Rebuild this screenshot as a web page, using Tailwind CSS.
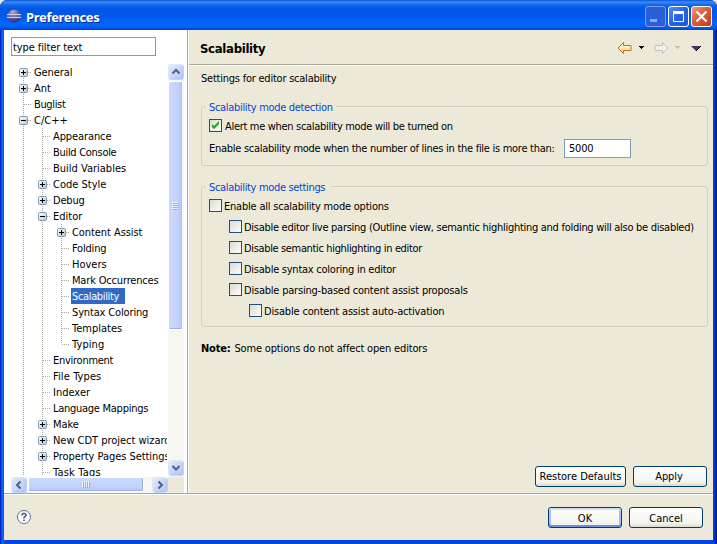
<!DOCTYPE html>
<html lang="en">
<head>
<meta charset="utf-8">
<title>Preferences</title>
<script src="https://cdn.jsdelivr.net/npm/@tailwindcss/browser@4"></script>
</head>
<body class="w-[717px] h-[544px] overflow-hidden bg-[#ece9d8]">
<svg class="absolute w-0 h-0">
  <defs>
    <linearGradient id="sbg" x2="1" y2="1"><stop stop-color="#e1eafe"/><stop offset="1" stop-color="#b0c6f8"/></linearGradient>
    <linearGradient id="cbg" x2="1" y2="1"><stop stop-color="#d8d8d2"/><stop offset="1" stop-color="#fff"/></linearGradient>
    <linearGradient id="bxg" x2="1" y2="1"><stop stop-color="#fff"/><stop offset="1" stop-color="#c8c2b4"/></linearGradient>
    <g id="sb"><rect x=".5" y=".5" width="15" height="15" rx="2" fill="#fff" stroke="#dfe6f5"/><rect x="1" y="1" width="14" height="14" rx="2" fill="url(#sbg)"/><path d="M2 15h12.500l.5-.5V2" fill="none" stroke="#a3bbee" stroke-width=".8"/></g>
    <g id="cb"><rect x=".5" y=".5" width="12" height="12" fill="url(#cbg)" stroke="#1c5180"/></g>
  </defs>
</svg>
<div class="w-[717px] h-[544px] flex flex-col rounded-t-[7px] overflow-hidden bg-[#0046dd] bg-[linear-gradient(90deg,#0019cf_0,#0831d9_1px,#166aee_2px,#0855dd_4px,#0046dd_8px,#0046dd_713px,#0441d8_714px,#001ea0_716px,#00138c_717px)] font-['DejaVu_Sans_Condensed','DejaVu_Sans',sans-serif] text-[11px] leading-[16px] text-black whitespace-nowrap">

  <header class="h-[30px] shrink-0 flex items-center pl-[6px] pr-[5px] bg-[linear-gradient(180deg,#0a4fd6_0,#3c8cf9_2px,#0f66ee_5px,#0056e4_9px,#0058ec_16px,#0066ff_23px,#0064fa_26px,#0046d0_30px)]">
    <svg class="mt-[2px] w-[16px] h-[16px]" viewBox="0 0 16 16">
      <defs><radialGradient id="orb" cx=".4" cy=".2" r=".85"><stop offset="0" stop-color="#c0a9c4"/><stop offset=".5" stop-color="#6a619c"/><stop offset="1" stop-color="#2c2468"/></radialGradient></defs>
      <circle cx="8" cy="8" r="6.500" fill="url(#orb)"/>
      <path d="M1 6.500h14M1 9.500h14" stroke="#c9cdf3" stroke-width="1"/><path d="M1 8h14" stroke="#7a78b4" stroke-width="1"/>
    </svg>
    <h1 class="ml-[4px] mt-[3px] font-['Noto_Sans','Open_Sans',sans-serif] font-bold text-[13px] tracking-[-0.32px] text-white [text-shadow:1px_1px_0_#0a2a86]">Preferences</h1>
    <div class="ml-auto mt-[3px] flex gap-[2px]">
      <svg class="w-[21px] h-[21px]" viewBox="0 0 21 21"><rect x=".5" y=".5" width="20" height="20" rx="2.500" fill="#2a5fd9" stroke="#7f9fe8"/><path d="M5 13h7v3H5z" fill="#8fa6ec"/></svg>
      <svg class="w-[21px] h-[21px]" viewBox="0 0 21 21"><defs><linearGradient id="mx" x2="1" y2="1"><stop stop-color="#5b8cf5"/><stop offset=".5" stop-color="#2763e4"/><stop offset="1" stop-color="#1f56d4"/></linearGradient></defs><rect x=".5" y=".5" width="20" height="20" rx="2.500" fill="url(#mx)" stroke="#fff"/><path d="M5.500 6v9.500h10V6" fill="none" stroke="#fff"/><path d="M5 5h11v3H5z" fill="#fff"/></svg>
      <svg class="w-[21px] h-[21px]" viewBox="0 0 21 21"><defs><linearGradient id="cl" x2="1" y2="1"><stop stop-color="#f0a084"/><stop offset=".45" stop-color="#e25a34"/><stop offset="1" stop-color="#c53a10"/></linearGradient></defs><rect x=".5" y=".5" width="20" height="20" rx="2.500" fill="url(#cl)" stroke="#fff"/><path d="M5.500 5.500l10 10M15.500 5.500l-10 10" stroke="#fff" stroke-width="2.300"/></svg>
    </div>
  </header>

  <div class="flex-1 min-h-0 flex flex-col mx-[4px] mb-[4px] bg-[#ece9d8]">
    <main class="h-[463px] flex">
      <aside class="w-[183px] bg-white flex flex-col pl-[7px] pt-[7px]">
        <div class="w-[145px] h-[19px] border border-[#7f9db9] pl-[1px] leading-[19px] tracking-[-0.1px]">type filter text</div>
        <div class="mt-[8px] w-[173px] grid grid-cols-[157px_16px] grid-rows-[413px_16px]">
          <ul id="tree" class="w-[156px] h-[412px] overflow-hidden pl-[3px]"></ul>
          <div class="flex flex-col bg-[#f7f6f1]">
            <svg class="w-[16px] h-[16px] shrink-0" viewBox="0 0 16 16"><use href="#sb"/><path d="M4.500 9.500L8 6l3.500 3.500" fill="none" stroke="#4d6185" stroke-width="2"/></svg>
            <div class="mt-px w-[15px] h-[249px] rounded-[2px] border border-white bg-[linear-gradient(90deg,#cbdafd,#c3d3fc_60%,#b5c9f7)] [box-shadow:inset_0_-1px_#98b0e2,inset_-1px_0_#a9bfee] flex items-center justify-center">
              <svg class="w-[7px] h-[8px]" viewBox="0 0 7 8"><path d="M0 .5h6M0 2.500h6M0 4.500h6M0 6.500h6" stroke="#eef4fe"/><path d="M1 1.500h6M1 3.500h6M1 5.500h6M1 7.500h6" stroke="#8cb0f8"/></svg>
            </div>
            <svg class="w-[16px] h-[16px] shrink-0 mt-auto mb-px" viewBox="0 0 16 16"><use href="#sb"/><path d="M4.500 6L8 9.500 11.500 6" fill="none" stroke="#4d6185" stroke-width="2"/></svg>
          </div>
          <div class="flex bg-[#f7f6f1]">
            <svg class="w-[16px] h-[16px] shrink-0" viewBox="0 0 16 16"><use href="#sb"/><path d="M9.500 4.500L6 8l3.500 3.500" fill="none" stroke="#4d6185" stroke-width="2"/></svg>
            <div class="ml-px w-[116px] h-[15px] rounded-[2px] border border-white bg-[linear-gradient(180deg,#cbdafd,#c3d3fc_60%,#b5c9f7)] [box-shadow:inset_0_-1px_#98b0e2,inset_-1px_0_#98b0e2] flex items-center justify-center">
              <svg class="w-[8px] h-[7px]" viewBox="0 0 8 7"><path d="M.5 0v6M2.500 0v6M4.500 0v6M6.500 0v6" stroke="#eef4fe"/><path d="M1.500 1v6M3.500 1v6M5.500 1v6M7.500 1v6" stroke="#8cb0f8"/></svg>
            </div>
            <svg class="w-[16px] h-[16px] shrink-0 ml-auto" viewBox="0 0 16 16"><use href="#sb"/><path d="M6.500 4.500L10 8l-3.500 3.500" fill="none" stroke="#4d6185" stroke-width="2"/></svg>
          </div>
          <div class="bg-[#ece9d8]"></div>
        </div>
      </aside>
      <div class="w-[2px] border-l border-[#aca899] bg-white"></div>

      <section class="flex-1 min-w-0 flex flex-col">
        <div class="h-[36px] shrink-0 flex items-center pl-[11px] pr-[12px] border-b border-white [box-shadow:inset_0_-1px_#aca899]">
          <h2 class="mt-[2px] font-bold text-[13px] tracking-[-0.3px]">Scalability</h2>
          <svg class="ml-auto w-[86px] h-[14px]" viewBox="0 0 86 14">
            <defs><linearGradient id="ar" x2="0" y2="1"><stop stop-color="#fffbe0"/><stop offset="1" stop-color="#fcd77c"/></linearGradient></defs>
            <g transform="translate(2 1)">
            <path d="M1 6L6.500.5v3H14v5H6.500v3z" fill="url(#ar)" stroke="#b8771a"/>
            <path d="M22 4h5v1h-5zM23 5h3v1h-3zM24 6h1v1h-1z" fill="#000"/>
            <path d="M51 6L45.500.5v3H38v5h7.500v3z" fill="#f0f0ee" stroke="#c0c0bc"/>
            <path d="M58 4h5v1h-5zM59 5h3v1h-3zM60 6h1v1h-1z" fill="#c0beb4"/>
            <path d="M74 4h10l-5 5z" fill="#3d3668"/><path d="M79 9l5-5" stroke="#000"/>
            </g>
          </svg>
        </div>
        <div class="pl-[12px] pr-[5px]">
          <p class="mt-[5px] tracking-[-0.23px]">Settings for editor scalability</p>
          <fieldset class="relative mt-[19px] w-[507px] min-w-0 h-[60px] border border-[#d0d0bf] rounded-[3px] pl-[7px] pt-[11px]">
            <span class="absolute left-[4px] top-[-7px] px-[3px] bg-[#ece9d8] text-[#0046d5] tracking-[-0.32px]">Scalability mode detection</span>
            <label class="flex items-start gap-[3px] h-[16px]"><svg class="mt-px w-[13px] h-[13px]" viewBox="0 0 13 13"><use href="#cb"/><path d="M3 5v3l2 2 5-5V2L5 7z" fill="#21a121"/></svg><span class="mt-px tracking-[-0.31px]">Alert me when scalability mode will be turned on</span></label>
            <div class="mt-[5px] flex items-center"><span class="w-[355px] mt-px tracking-[-0.28px]">Enable scalability mode when the number of lines in the file is more than:</span><span class="w-[67px] h-[19px] border border-[#7f9db9] bg-white pl-[4px] leading-[18px] tracking-[-0.2px]">5000</span></div>
          </fieldset>
          <fieldset class="relative mt-[20px] w-[507px] min-w-0 h-[141px] border border-[#d0d0bf] rounded-[3px] pl-[7px] pt-[11px] flex flex-col gap-[5px]">
            <span class="absolute left-[4px] top-[-7px] pl-[3px] pr-[6px] bg-[#ece9d8] text-[#0046d5] tracking-[-0.34px]">Scalability mode settings</span>
            <label class="flex items-start gap-[2px] h-[16px]"><svg class="mt-px w-[13px] h-[13px]" viewBox="0 0 13 13"><use href="#cb"/></svg><span class="mt-px tracking-[-0.21px]">Enable all scalability mode options</span></label>
            <label class="flex items-start gap-[2px] h-[16px] pl-[20px]"><svg class="mt-px w-[13px] h-[13px] shrink-0" viewBox="0 0 13 13"><use href="#cb"/></svg><span class="mt-px tracking-[-0.28px]">Disable editor live parsing (Outline view, semantic highlighting and folding will also be disabled)</span></label>
            <label class="flex items-start gap-[2px] h-[16px] pl-[20px]"><svg class="mt-px w-[13px] h-[13px]" viewBox="0 0 13 13"><use href="#cb"/></svg><span class="mt-px tracking-[-0.35px]">Disable semantic highlighting in editor</span></label>
            <label class="flex items-start gap-[2px] h-[16px] pl-[20px]"><svg class="mt-px w-[13px] h-[13px]" viewBox="0 0 13 13"><use href="#cb"/></svg><span class="mt-px tracking-[-0.25px]">Disable syntax coloring in editor</span></label>
            <label class="flex items-start gap-[2px] h-[16px] pl-[20px]"><svg class="mt-px w-[13px] h-[13px]" viewBox="0 0 13 13"><use href="#cb"/></svg><span class="mt-px tracking-[-0.21px]">Disable parsing-based content assist proposals</span></label>
            <label class="flex items-start gap-[2px] h-[16px] pl-[40px]"><svg class="mt-px w-[13px] h-[13px]" viewBox="0 0 13 13"><use href="#cb"/></svg><span class="mt-px tracking-[-0.18px]">Disable content assist auto-activation</span></label>
          </fieldset>
          <p class="mt-[14px] flex gap-[4px]"><b class="tracking-[-0.2px]">Note:</b><span class="tracking-[-0.17px]">Some options do not affect open editors</span></p>
        </div>
        <div class="mt-auto mb-[6px] pr-[6px] flex justify-end gap-[7px]">
          <button class="w-[91px] h-[21px] rounded-[3px] border border-[#003c74] bg-[linear-gradient(180deg,#fff,#f3f3ef_80%,#dcd8cc)] leading-[20px]">Restore Defaults</button>
          <button class="w-[74px] h-[21px] rounded-[3px] border border-[#003c74] bg-[linear-gradient(180deg,#fff,#f3f3ef_80%,#dcd8cc)] leading-[20px] pr-[2px] tracking-[-0.1px]">Apply</button>
        </div>
      </section>
    </main>

    <footer class="flex-1 border-t border-[#aca899] [box-shadow:inset_0_1px_#fff] flex pl-[12px] pr-[10px] pt-[13px]">
      <svg class="w-[16px] h-[16px] mt-[2px]" viewBox="0 0 16 16"><circle cx="8" cy="8" r="6.500" fill="#fff" stroke="#5f6f92"/><path d="M6 6.500V5.500L7 4.500h2l1 1v1L8 8.500v1" fill="none" stroke="#44557c" stroke-width="1.500"/><path d="M7.200 10.500h1.600v1.500H7.200z" fill="#44557c"/></svg>
      <div class="ml-auto flex gap-[7px]">
        <button class="w-[74px] h-[21px] rounded-[3px] border border-[#003c74] bg-[linear-gradient(180deg,#fff,#f3f3ef_80%,#e8e5dc)] [box-shadow:inset_0_2px_#cee0fb,inset_0_-2px_#6f8fdc,inset_2px_0_#a6c0f0,inset_-2px_0_#a6c0f0] leading-[21px]">OK</button>
        <button class="w-[74px] h-[21px] rounded-[3px] border border-[#003c74] bg-[linear-gradient(180deg,#fff,#f3f3ef_80%,#dcd8cc)] leading-[21px]">Cancel</button>
      </div>
    </footer>
  </div>
</div>

<script>
// [depth, label, kind, tracking in px]: kind is + (closed), - (open) or empty (leaf)
const rows = [
  [0,'General','+',-.1],[0,'Ant','+',0],[0,'Buglist','',-.35],[0,'C/C++','-',0],
  [1,'Appearance','',-.1],[1,'Build Console','',-.3],[1,'Build Variables','',0],[1,'Code Style','+',0],[1,'Debug','+',-.2],[1,'Editor','-',0],
  [2,'Content Assist','+',-.07],[2,'Folding','',-.2],[2,'Hovers','',0],[2,'Mark Occurrences','',-.17],[2,'Scalability','',-.35],[2,'Syntax Coloring','',-.15],[2,'Templates','',0],[2,'Typing','',.1],
  [1,'Environment','',-.27],[1,'File Types','',.1],[1,'Indexer','',0],[1,'Language Mappings','',-.27],[1,'Make','+',-.1],[1,'New CDT project wizard','+',-.03],[1,'Property Pages Settings','+',-.05],[1,'Task Tags','',.2]
];
const line = d => `<path d="${d}" stroke="#aca899" stroke-dasharray="1 1"/>`;
const cell = s => `<svg class="w-[19px] h-[16px] shrink-0" viewBox="0 0 19 16">${s}</svg>`;
document.getElementById('tree').innerHTML = rows.map(([depth, label, kind, tracking], i) => {
  const guides = cell(line('M9.500 0v16')).repeat(depth);
  const down = label === 'Typing' ? 8 : 16;
  const top = i === 0 ? 8 : 0;
  let art = line(`M9.500 ${top}V${down}`) + line('M10 8.500h8');
  if (kind) art += `<rect x="5.500" y="4.500" width="8" height="8" rx="1" fill="url(#bxg)" stroke="#7898b5"/><path d="M7 8.500h5${kind === '+' ? 'M9.500 6v5' : ''}" stroke="#000"/>`;
  const look = label === 'Scalability' ? 'bg-[#316ac5] text-white pl-px w-[54px] h-[16px] leading-[18px]' : 'pl-px h-[16px] leading-[18px]';
  return `<li class="flex h-[16px]">${guides}${cell(art)}<span class="${look}" style="letter-spacing:${tracking}px">${label}</span></li>`;
}).join('');
</script>
</body>
</html>
